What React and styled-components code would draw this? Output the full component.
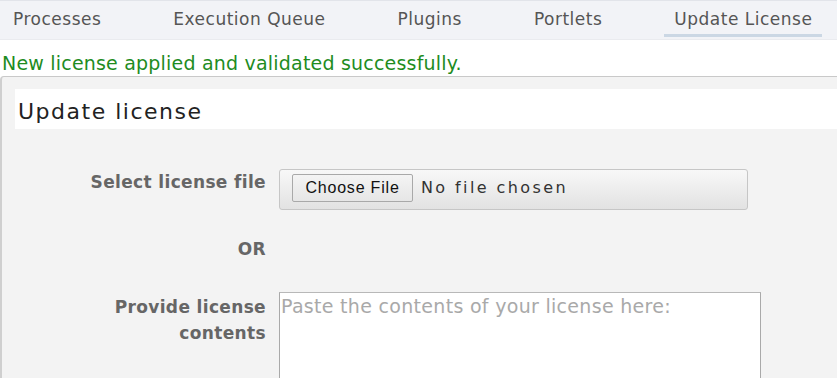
import React from 'react'
import styled, { createGlobalStyle } from 'styled-components'

const GlobalStyle = createGlobalStyle`
    html, body {
        margin: 0;
        padding: 0;
        background: #ffffff;
        overflow: hidden;
        font-family: 'DejaVu Sans', Verdana, sans-serif;
    }
`
const TabBar = styled.div`
    display: flex;
    gap: 52px;
    height: 40px;
    box-sizing: border-box;
    padding-left: 3px;
    background: #f2f3f7;
    border-top: 1px solid #e2e4ea;
    border-bottom: 1px solid #eaebef;
`
const Tab = styled.div`
    position: relative;
    display: flex;
    align-items: center;
    padding: 0 10px 2px;
    font-size: 17px;
    letter-spacing: 0.5px;
    color: #555555;

    &::after {
        content: '';
        display: ${(props) => (props.$active ? 'block' : 'none')};
        position: absolute;
        left: 0;
        right: 0;
        bottom: 2px;
        height: 3px;
        background: #cbd7e4;
    }
`
const Message = styled.div`
    margin: 12px 0 2px;
    padding-left: 2px;
    font-size: 19px;
    line-height: 22px;
    letter-spacing: 0.2px;
    color: #1e8c1e;
`
const Panel = styled.div`
    margin-right: -20px;
    padding: 12px 0 60px 13px;
    background: #f3f3f3;
    border-top: 1px solid #c9c9c9;
    border-left: 2px solid #cfcfcf;
    border-top-left-radius: 4px;
`
const PanelHeader = styled.div`
    height: 40px;
    box-sizing: border-box;
    padding: 6px 3px 0;
    background: #ffffff;
    font-size: 22px;
    line-height: 34px;
    letter-spacing: 1.5px;
    color: #222222;
`
const Form = styled.div`
    padding-top: 40px;
`
const Row = styled.div`
    display: grid;
    grid-template-columns: 251px 1fr;
    column-gap: 13px;
    align-items: start;
    margin-top: ${(props) => props.$gap || 0}px;
`
const Label = styled.div`
    padding-top: ${(props) => props.$pad || 0}px;
    text-align: right;
    font-size: 17px;
    font-weight: bold;
    line-height: 26px;
    letter-spacing: 0.35px;
    color: #666666;
`
const FileBox = styled.div`
    display: flex;
    align-items: center;
    gap: 8px;
    width: 469px;
    height: 41px;
    box-sizing: border-box;
    padding: 0 12px 4px;
    border: 1px solid #c6c6c6;
    border-radius: 3px;
    background: linear-gradient(#f8f8f8, #e2e2e2);
`
const ChooseButton = styled.button`
    width: 121px;
    height: 28px;
    padding: 0;
    border: 1px solid #a9a9a9;
    border-radius: 2px;
    background: linear-gradient(#f4f4f4, #e6e6e6);
    font-family: 'Liberation Sans', Arial, sans-serif;
    font-size: 16px;
    letter-spacing: 0.8px;
    color: #111111;
`
const FileName = styled.span`
    font-size: 16px;
    letter-spacing: 2.4px;
    color: #333333;
`
const LicenseText = styled.textarea`
    display: block;
    width: 482px;
    height: 120px;
    box-sizing: border-box;
    margin: 0;
    padding: 1px 1px;
    border: 1px solid #a9a9a9;
    border-top-color: #b8b8b8;
    border-radius: 0;
    background: #ffffff;
    resize: none;
    font-family: 'DejaVu Sans', Verdana, sans-serif;
    font-size: 19px;
    line-height: 24px;
    letter-spacing: 0.3px;
    color: #333333;

    &::placeholder {
        color: #a9a9a9;
    }
`
const tabs = ['Processes', 'Execution Queue', 'Plugins', 'Portlets', 'Update License']

const App = () => (
    <>
        <GlobalStyle />
        <TabBar>
            {tabs.map((name) => (
                <Tab key={name} $active={name === 'Update License'}>
                    {name}
                </Tab>
            ))}
        </TabBar>
        <Message>New license applied and validated successfully.</Message>
        <Panel>
            <PanelHeader>Update license</PanelHeader>
            <Form>
                <Row>
                    <Label>Select license file</Label>
                    <FileBox>
                        <ChooseButton type="button">Choose File</ChooseButton>
                        <FileName>No file chosen</FileName>
                    </FileBox>
                </Row>
                <Row $gap={26}>
                    <Label>OR</Label>
                </Row>
                <Row $gap={30}>
                    <Label $pad={2}>
                        Provide license
                        <br />
                        contents
                    </Label>
                    <LicenseText placeholder="Paste the contents of your license here:" />
                </Row>
            </Form>
        </Panel>
    </>
)

export default App
